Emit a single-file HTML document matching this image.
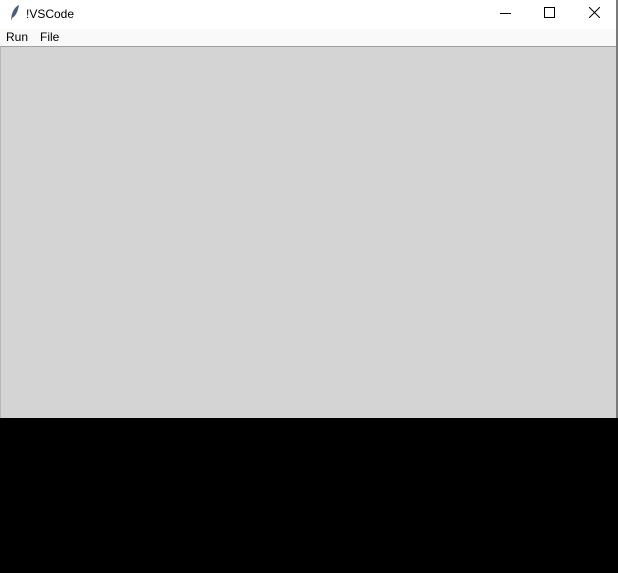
<!DOCTYPE html>
<html><head><style>
body{margin:0;width:618px;height:573px;overflow:hidden;background:#000;font-family:"Liberation Sans",sans-serif;position:relative}
.t{position:absolute;left:0;top:0;width:618px;height:29px;background:#fff}
.m{position:absolute;left:0;top:29px;width:618px;height:17px;background:#f9f9f9;font-size:12px}
.c{position:absolute;left:0;top:46px;width:616px;height:372px;background:#d4d4d4;border-top:1px solid #a0a0a0;border-left:1px solid #b8b8b8;box-sizing:border-box}
.r{position:absolute;left:616px;top:0;width:2px;height:418px;background:#7a7a7a}
</style></head><body>
<div class="t">
<svg style="position:absolute;left:8px;top:4px" width="12" height="18" viewBox="0 0 12 18"><path d="M3 17 C3 10 6 3 11 1 C10 7 8 12 4 14 Z" fill="#4a5d7a"/></svg>
<span style="position:absolute;left:26px;top:7px;font-size:12px;color:#000">!VSCode</span>
<div style="position:absolute;left:500px;top:13px;width:11px;height:1px;background:#000"></div>
<div style="position:absolute;left:544px;top:7px;width:9px;height:9px;border:1px solid #000"></div>
<svg style="position:absolute;left:589px;top:7px" width="11" height="11"><path d="M0 0L11 11M11 0L0 11" stroke="#000" stroke-width="1"/></svg>
</div>
<div class="m"><span style="position:absolute;left:6px;top:1px">Run</span><span style="position:absolute;left:40px;top:1px">File</span></div>
<div class="c"></div>
<div class="r"></div>
</body></html>
